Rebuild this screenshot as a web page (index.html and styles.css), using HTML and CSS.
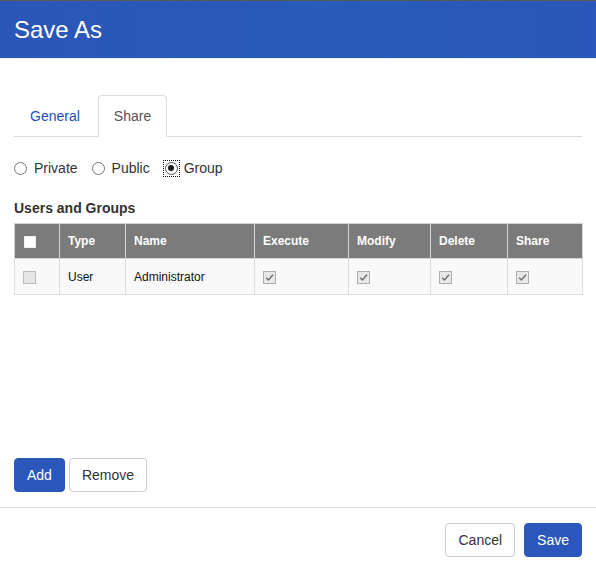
FILE: index.html
```html
<!DOCTYPE html>
<html>
<head>
<meta charset="utf-8">
<link rel="stylesheet" href="styles.css">
</head>
<body>
<div class="dialog">
  <div class="header"><h1 class="title">Save As</h1></div>
  <div class="body">
    <ul class="tabs">
      <li class="tab"><span class="tab-link">General</span></li>
      <li class="tab active"><span class="tab-link">Share</span></li>
    </ul>
    <div class="radios">
      <label class="radio"><span class="circle"></span>Private</label>
      <label class="radio"><span class="circle"></span>Public</label>
      <label class="radio"><span class="focus"><span class="circle checked"></span></span>Group</label>
    </div>
    <div class="section-title">Users and Groups</div>
    <table class="grid">
      <thead>
        <tr>
          <th class="c-sel"><span class="cb cb-head"></span></th>
          <th class="c-type">Type</th>
          <th class="c-name">Name</th>
          <th class="c-exec">Execute</th>
          <th class="c-mod">Modify</th>
          <th class="c-del">Delete</th>
          <th class="c-share">Share</th>
        </tr>
      </thead>
      <tbody>
        <tr>
          <td><span class="cb cb-off"></span></td>
          <td>User</td>
          <td>Administrator</td>
          <td><span class="cb cb-on"><svg viewBox="0 0 13 13" width="11" height="11"><path d="M2.5 6.8 L5.2 9.4 L10.6 3.2" fill="none" stroke="#6f6f6f" stroke-width="1.7"/></svg></span></td>
          <td><span class="cb cb-on"><svg viewBox="0 0 13 13" width="11" height="11"><path d="M2.5 6.8 L5.2 9.4 L10.6 3.2" fill="none" stroke="#6f6f6f" stroke-width="1.7"/></svg></span></td>
          <td><span class="cb cb-on"><svg viewBox="0 0 13 13" width="11" height="11"><path d="M2.5 6.8 L5.2 9.4 L10.6 3.2" fill="none" stroke="#6f6f6f" stroke-width="1.7"/></svg></span></td>
          <td><span class="cb cb-on"><svg viewBox="0 0 13 13" width="11" height="11"><path d="M2.5 6.8 L5.2 9.4 L10.6 3.2" fill="none" stroke="#6f6f6f" stroke-width="1.7"/></svg></span></td>
        </tr>
      </tbody>
    </table>
    <div class="actions">
      <button class="btn btn-primary">Add</button>
      <button class="btn btn-default">Remove</button>
    </div>
  </div>
  <div class="footer">
    <button class="btn btn-default">Cancel</button>
    <button class="btn btn-primary">Save</button>
  </div>
</div>
</body>
</html>
```
FILE: styles.css
```css
* { box-sizing: border-box; }
html, body { margin: 0; padding: 0; background: #fff; }
body {
  font-family: "Liberation Sans", Arial, sans-serif;
  font-size: 14px;
  line-height: 20px;
  color: #333;
}
.dialog {
  height: 571px;
  display: flex;
  flex-direction: column;
}
.header {
  height: 59px;
  border-top: 1px solid #5a5a5a;
  background: linear-gradient(90deg, #2b56b8 0%, #275bba 60%, #2a57b9 100%);
  display: flex;
  align-items: center;
  border-bottom: 1px solid #e9eef8;
}
.title {
  margin: 0;
  padding: 0 14px;
  font-size: 24px;
  font-weight: normal;
  line-height: 28px;
  color: #fff;
}
.body {
  flex: 1;
  display: flex;
  flex-direction: column;
  padding: 36px 14px 15px;
}
.tabs {
  list-style: none;
  margin: 0;
  padding: 0;
  display: flex;
  border-bottom: 1px solid #ddd;
}
.tab {
  margin-right: 2px;
  margin-bottom: -1px;
}
.tab-link {
  display: block;
  padding: 10px 15px;
  border: 1px solid transparent;
  border-radius: 4px 4px 0 0;
  color: #1a4fb8;
}
.tab.active .tab-link {
  color: #555;
  background: #fff;
  border-color: #ddd;
  border-bottom-color: #fff;
}
.radios {
  display: flex;
  align-items: center;
  margin-top: 21px;
  gap: 14px;
}
.radio {
  display: flex;
  align-items: center;
  color: #333;
}
.circle {
  width: 13px;
  height: 13px;
  border: 1px solid #777;
  border-radius: 50%;
  background: #fff;
  margin-right: 7px;
  display: inline-flex;
  align-items: center;
  justify-content: center;
}
.focus {
  display: inline-flex;
  outline: 1px dotted #111;
  padding: 1px;
  margin-right: 5px;
}
.focus .circle { margin-right: 0; border-color: #555; }
.circle.checked::after {
  content: "";
  width: 6px;
  height: 6px;
  border-radius: 50%;
  background: #1e1e1e;
}
.section-title {
  margin-top: 20px;
  font-weight: bold;
  color: #333;
}
.grid {
  margin-top: 5px;
  width: 568px;
  border-collapse: collapse;
  table-layout: fixed;
  font-size: 12px;
}
.grid th {
  height: 35px;
  background: #7b7b7b;
  color: #fff;
  font-weight: bold;
  text-align: left;
  padding: 0 8px;
  border: 1px solid #d4d4d4;
}
.grid td {
  height: 36px;
  background: #f9f9f9;
  color: #111;
  padding: 0 8px;
  border: 1px solid #ddd;
  vertical-align: middle;
}
.c-sel { width: 45px; }
.c-type { width: 66px; }
.c-name { width: 129px; }
.c-exec { width: 94px; }
.c-mod { width: 82px; }
.c-del { width: 77px; }
.c-share { width: 75px; }
.cb {
  display: inline-flex;
  align-items: center;
  justify-content: center;
  width: 13px;
  height: 13px;
  vertical-align: middle;
}
.cb-head {
  width: 12px;
  height: 12px;
  background: #fff;
  border: 1px solid #eee;
  margin-left: 1px;
}
.cb-off {
  background: #e6e6e6;
  border: 1px solid #bdbdbd;
}
.cb-on {
  background: #e8e8e8;
  border: 1px solid #b0b0b0;
}
.actions {
  margin-top: auto;
  display: flex;
  gap: 4px;
}
.btn {
  font-family: "Liberation Sans", Arial, sans-serif;
  font-size: 14px;
  line-height: 20px;
  padding: 6px 12px;
  border: 1px solid transparent;
  border-radius: 4px;
  height: 34px;
  cursor: pointer;
}
.btn-primary {
  background: #2a57b9;
  border-color: #2a57b9;
  color: #fff;
}
.btn-default {
  background: #fff;
  border-color: #ccc;
  color: #333;
}
.footer {
  border-top: 1px solid #e5e5e5;
  padding: 15px 14px 14px;
  display: flex;
  justify-content: flex-end;
  gap: 9px;
}
```
